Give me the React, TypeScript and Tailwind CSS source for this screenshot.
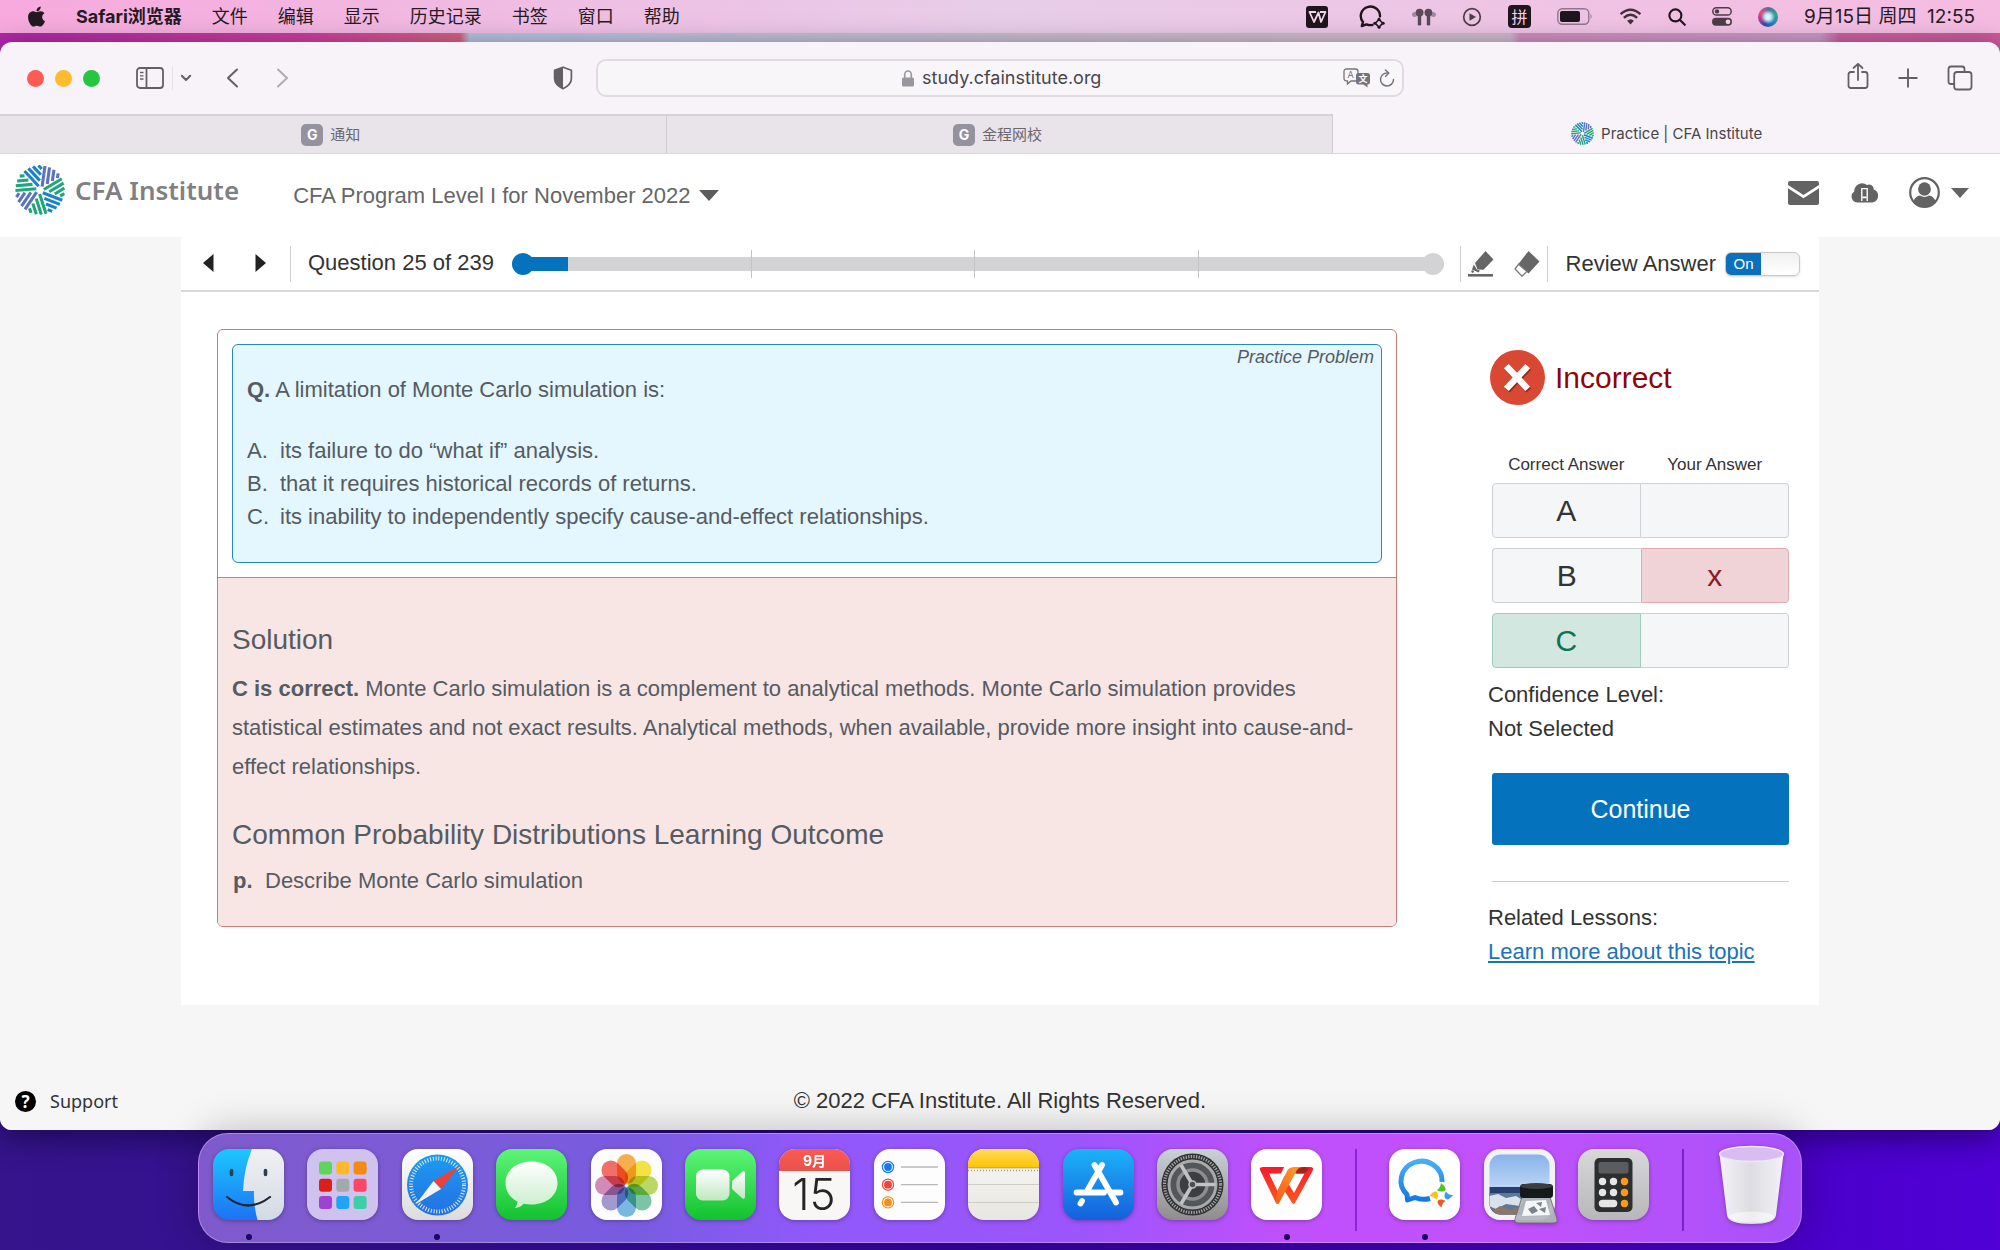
import React from "react";
import { FaApple } from "react-icons/fa";

const UI = "font-['Inter','Noto_Sans_CJK_SC',sans-serif]";

const PINWHEEL = [
  { angle: 8, color: "#5c74bd" },
  { angle: 59, color: "#1fa67a" },
  { angle: 111, color: "#1b83c6" },
  { angle: 162, color: "#1fa67a" },
  { angle: 214, color: "#5c74bd" },
  { angle: 265, color: "#1fa67a" },
  { angle: 317, color: "#1b83c6" },
];

function Pinwheel({ className }: { className: string }) {
  return (
    <svg viewBox="-25 -25 50 50" className={className} aria-hidden="true">
      {PINWHEEL.map((s) => (
        <g key={s.angle} transform={`rotate(${s.angle})`} stroke={s.color} strokeWidth="3.1">
          <path d="M1.6 -3.6V-24.5M6.3 -7V-23.7M11 -10.6V-22M15.6 -14.2V-19" />
        </g>
      ))}
    </svg>
  );
}

function MenuIcon({ label, children }: { label: string; children: React.ReactNode }) {
  return (
    <button type="button" aria-label={label} className="flex items-center">
      {children}
    </button>
  );
}

function MenuBar() {
  return (
    <header
      className={`flex h-[33px] items-center justify-between bg-linear-to-r from-[#f7a9dd] via-[#e7cde8] to-[#f5bbe1] pr-[25px] pl-[27px] text-[18px] leading-6 text-[#261a24] ${UI}`}
    >
      <nav className="flex items-center gap-[30px]">
        <button type="button" aria-label="Apple">
          <FaApple className="h-[23px] w-[19px] text-[#231a21]" />
        </button>
        <button type="button" className="font-bold">Safari浏览器</button>
        <button type="button">文件</button>
        <button type="button">编辑</button>
        <button type="button">显示</button>
        <button type="button">历史记录</button>
        <button type="button">书签</button>
        <button type="button">窗口</button>
        <button type="button">帮助</button>
      </nav>
      <div className="flex items-center gap-[26px]">
        <MenuIcon label="WPS">
          <svg viewBox="0 0 22 22" className="size-[22px]">
            <rect width="22" height="22" rx="3" fill="#1f151d" />
            <path d="M10 6H3.5L8 16L12.5 6.5L15 16L19.5 6H14" fill="none" stroke="#f3d5ea" strokeWidth="1.8" strokeLinejoin="round" />
          </svg>
        </MenuIcon>
        <MenuIcon label="WeCom">
          <svg viewBox="0 0 28 24" className="ml-1 h-6 w-7" fill="none" stroke="#1f151d" strokeWidth="2.4">
            <path d="M22 11.5A9.6 9.4 0 1 0 5 17L3.8 21L8.5 19.4Q11 20.5 14.5 20" strokeLinejoin="round" strokeLinecap="round" />
            <path d="M21 14.5L24.8 18.2L21 22L17.2 18.2Z" strokeWidth="1.6" />
            <g fill="#1f151d" stroke="none">
              <circle cx="21" cy="14.2" r="1.5" /><circle cx="25.2" cy="18.2" r="1.5" /><circle cx="21" cy="22.2" r="1.5" /><circle cx="16.8" cy="18.2" r="1.5" />
            </g>
          </svg>
        </MenuIcon>
        <MenuIcon label="AirPods">
          <svg viewBox="0 0 24 18" className="h-[18px] w-6" fill="#5a4a57">
            <circle cx="7.6" cy="4.6" r="3.9" /><circle cx="16.4" cy="4.6" r="3.9" />
            <rect x="5.8" y="6" width="3.4" height="11.5" rx="1.2" /><rect x="14.8" y="6" width="3.4" height="11.5" rx="1.2" />
            <circle cx="2.6" cy="6.5" r="2.5" opacity=".5" /><circle cx="21.4" cy="6.5" r="2.5" opacity=".5" />
          </svg>
        </MenuIcon>
        <MenuIcon label="正在播放">
          <svg viewBox="0 0 20 20" className="size-5">
            <circle cx="10" cy="10" r="8.3" fill="none" stroke="#4c3d49" strokeWidth="1.7" />
            <path d="M7.5 6.3L14 10L7.5 13.7Z" fill="#4c3d49" />
          </svg>
        </MenuIcon>
        <button type="button" className="grid size-[23px] place-items-center rounded bg-[#1f151d] text-[16px] leading-none text-[#f3d5ea]">
          拼
        </button>
        <MenuIcon label="电池">
          <svg viewBox="0 0 36 17" className="h-[17px] w-9">
            <rect x=".8" y=".8" width="31" height="15.4" rx="4.5" fill="none" stroke="#8c7888" strokeWidth="1.4" />
            <rect x="3" y="3" width="20" height="11" rx="2" fill="#1f151d" />
            <path d="M33.6 5.8Q35.6 8.5 33.6 11.2Z" fill="#8c7888" />
          </svg>
        </MenuIcon>
        <MenuIcon label="Wi-Fi">
          <svg viewBox="0 0 24 18" className="h-[17px] w-[23px]" fill="none" stroke="#3f313d" strokeWidth="2.5">
            <path d="M1.5 6.5Q12 -3 22.5 6.5M5 10.4Q12 4 19 10.4" />
            <path d="M8.4 13.6Q12 10.4 15.6 13.6L12 17.5Z" fill="#3f313d" stroke="none" />
          </svg>
        </MenuIcon>
        <MenuIcon label="搜索">
          <svg viewBox="0 0 18 18" className="size-[18px]" fill="none" stroke="#1f151d" strokeWidth="2.1" strokeLinecap="round">
            <circle cx="7.4" cy="7.4" r="6" /><path d="M12 12L16.8 16.8" />
          </svg>
        </MenuIcon>
        <MenuIcon label="控制中心">
          <svg viewBox="0 0 20 19" className="h-[19px] w-5">
            <rect x=".8" y=".8" width="18.4" height="7.2" rx="3.6" fill="none" stroke="#4c3d49" strokeWidth="1.5" />
            <circle cx="5" cy="4.4" r="2.2" fill="#4c3d49" />
            <rect y="10.8" width="20" height="8" rx="4" fill="#4c3d49" />
            <circle cx="16" cy="14.8" r="2.4" fill="#f3d5ea" />
          </svg>
        </MenuIcon>
        <MenuIcon label="Siri">
          <span className="size-5 rounded-full bg-[radial-gradient(circle_at_50%_50%,#fff_0%,#bfe9f5_22%,transparent_50%),conic-gradient(#5a6c9c,#2fa58f_20%,#2a7fc0_40%,#2b4fa5_55%,#b0389a_70%,#e0527f_85%,#5a6c9c)]" />
        </MenuIcon>
        <time className="text-[19px] whitespace-pre">9月15日 周四  12:55</time>
      </div>
    </header>
  );
}

function BrowserToolbar() {
  return (
    <div className={`grid h-[72px] grid-cols-[596fr_808fr_596fr] items-center text-[#635f66] ${UI}`}>
      <div className="flex items-center pr-[23px] pl-[27px]">
        <div className="flex gap-[11px]">
          <button type="button" aria-label="关闭" className="size-[17px] rounded-full bg-[#fe5b54]" />
          <button type="button" aria-label="最小化" className="size-[17px] rounded-full bg-[#fdbb2e]" />
          <button type="button" aria-label="全屏" className="size-[17px] rounded-full bg-[#28c640]" />
        </div>
        <button type="button" aria-label="边栏" className="ml-9">
          <svg viewBox="0 0 28 22" className="h-[22px] w-7" fill="none" stroke="currentColor" strokeWidth="1.8">
            <rect x="1" y="1" width="26" height="20" rx="3" /><path d="M10.5 1V21" /><path d="M4 5.5H7.5M4 8.8H7.5M4 12H7.5" strokeWidth="1.3" />
          </svg>
        </button>
        <span className="ml-2 h-6 w-px bg-[#e6e1e8]" />
        <button type="button" aria-label="标签页组" className="ml-[7px]">
          <svg viewBox="0 0 12 8" className="h-2 w-3" fill="none" stroke="currentColor" strokeWidth="2" strokeLinecap="round" strokeLinejoin="round">
            <path d="M1.8 1.8L6 6L10.2 1.8" />
          </svg>
        </button>
        <button type="button" aria-label="后退" className="ml-[34px]">
          <svg viewBox="0 0 13 20" className="h-5 w-[13px]" fill="none" stroke="currentColor" strokeWidth="2" strokeLinecap="round" strokeLinejoin="round">
            <path d="M11 1.5L2 10L11 18.5" />
          </svg>
        </button>
        <button type="button" aria-label="前进" className="ml-[37px] text-[#b0abb3]">
          <svg viewBox="0 0 13 20" className="h-5 w-[13px]" fill="none" stroke="currentColor" strokeWidth="2" strokeLinecap="round" strokeLinejoin="round">
            <path d="M2 1.5L11 10L2 18.5" />
          </svg>
        </button>
        <button type="button" aria-label="隐私报告" className="ml-auto">
          <svg viewBox="0 0 20 24" className="h-6 w-5">
            <path d="M10 1.2L18.4 4.2V12.5Q18.4 18.5 10 22.8Q1.6 18.5 1.6 12.5V4.2Z" fill="none" stroke="currentColor" strokeWidth="1.7" strokeLinejoin="round" />
            <path d="M10 1.2V22.8Q1.6 18.5 1.6 12.5V4.2Z" fill="currentColor" />
          </svg>
        </button>
      </div>
      <div className="flex h-[38px] items-center rounded-[10px] border-2 border-[#e0dbe2] bg-[#f9f6fa] px-[7px]">
        <span className="w-[62px]" />
        <div className="flex flex-1 items-center justify-center gap-2">
          <svg viewBox="0 0 12 17" className="h-[17px] w-3" aria-hidden="true">
            <path d="M2.7 8V4.6A3.3 3.6 0 0 1 9.3 4.6V8" fill="none" stroke="#9a969d" strokeWidth="1.6" />
            <rect y="7.4" width="12" height="9.2" rx="1.6" fill="#9a969d" />
          </svg>
          <input type="text" aria-label="地址" defaultValue="study.cfainstitute.org" className="h-7 w-[186px] bg-transparent text-[18px] leading-7 text-[#48454b] outline-none" />
        </div>
        <button type="button" aria-label="翻译">
          <svg viewBox="0 0 28 20" className="h-5 w-7 text-[#77737a]">
            <path d="M3.5 1H12.5Q15 1 15 3.5V10.5Q15 13 12.5 13H8L4.5 16V13Q1 13 1 10.5V3.5Q1 1 3.5 1Z" fill="none" stroke="currentColor" strokeWidth="1.3" />
            <path d="M15.5 5H24.5Q27 5 27 7.5V14Q27 16.5 24.5 16.5V19.5L20.5 16.5H15.5Q13 16.5 13 14V7.5Q13 5 15.5 5Z" fill="currentColor" />
            <text x="4.6" y="10.4" fontSize="9" fill="currentColor" fontFamily="Inter">A</text>
            <text x="15.5" y="14.2" fontSize="9" fontWeight="700" fill="#fff" fontFamily="Noto Sans CJK SC">文</text>
          </svg>
        </button>
        <button type="button" aria-label="重新载入" className="ml-2">
          <svg viewBox="0 0 16 18" className="h-[18px] w-4" fill="none" stroke="#77737a" strokeWidth="1.5" strokeLinecap="round" strokeLinejoin="round">
            <path d="M8.6 4A6.5 6.5 0 1 0 14.5 10.4" /><path d="M6.4 1L9.8 4L6.6 7.2" />
          </svg>
        </button>
      </div>
      <div className="flex items-center justify-end gap-[29px] pr-[27px]">
        <button type="button" aria-label="共享">
          <svg viewBox="0 0 22 28" className="mb-1 h-7 w-[22px]" fill="none" stroke="currentColor" strokeWidth="1.8" strokeLinecap="round" strokeLinejoin="round">
            <path d="M7 10H4Q1.5 10 1.5 12.5V23.5Q1.5 26 4 26H18Q20.5 26 20.5 23.5V12.5Q20.5 10 18 10H15" /><path d="M11 18V2M6.5 6L11 1.8L15.5 6" />
          </svg>
        </button>
        <button type="button" aria-label="新标签页">
          <svg viewBox="0 0 20 20" className="size-5" stroke="currentColor" strokeWidth="1.9" strokeLinecap="round"><path d="M10 1.2V18.8M1.2 10H18.8" /></svg>
        </button>
        <button type="button" aria-label="标签页概览">
          <svg viewBox="0 0 26 26" className="size-[26px]" fill="none" stroke="currentColor" strokeWidth="1.8">
            <path d="M7 19H4Q1.5 19 1.5 16.5V4Q1.5 1.5 4 1.5H15Q17.5 1.5 17.5 4V7" /><rect x="7.2" y="7" width="17.3" height="17.5" rx="2.8" />
          </svg>
        </button>
      </div>
    </div>
  );
}

function TabBar() {
  const idle = "flex items-center justify-center gap-[7px] border-t-2 border-r border-t-[#d6d0d8] border-r-[#d0cbd2] bg-[#e9e4ea] pr-1 text-[#6b676e]";
  const badge = "grid size-[22px] place-items-center rounded-[5px] bg-[#93929e] text-[14px] leading-none font-bold text-white";
  return (
    <div role="tablist" className={`grid h-10 grid-cols-3 border-b border-[#dcd7de] text-[15px] leading-5 ${UI}`}>
      <button role="tab" type="button" aria-selected="false" className={idle}><span className={badge}>G</span>通知</button>
      <button role="tab" type="button" aria-selected="false" className={idle}><span className={badge}>G</span>金程网校</button>
      <button role="tab" type="button" aria-selected="true" className="flex items-center justify-center gap-[7px] text-[#48454b]">
        <Pinwheel className="size-[23px]" />Practice | CFA Institute
      </button>
    </div>
  );
}

function SiteHeader() {
  return (
    <div className="flex h-[83px] items-center bg-white pr-[31px] pl-[15px] text-[#666]">
      <a href="#home" className="mb-3 flex items-center gap-[10px] font-['Noto_Sans',sans-serif] text-[26px] leading-9 font-semibold text-[#7f8083]">
        <Pinwheel className="size-[50px]" />CFA Institute
      </a>
      <button type="button" className="ml-[54px] flex items-center gap-2 text-[22px] leading-8">
        CFA Program Level I for November 2022
        <svg viewBox="0 0 20 11" className="h-[11px] w-5"><path d="M0 0H20L10 11Z" fill="#5c5c5c" /></svg>
      </button>
      <div className="mb-1.5 ml-auto flex items-center">
        <button type="button" aria-label="Messages">
          <svg viewBox="0 0 31 24" className="h-6 w-[31px]" fill="#636363">
            <path d="M2 0H29Q31 0 31 2V4L15.5 14L0 4V2Q0 0 2 0Z" /><path d="M0 7.2L15.5 17.2L31 7.2V22Q31 24 29 24H2Q0 24 0 22Z" />
          </svg>
        </button>
        <button type="button" aria-label="Downloads" className="ml-8">
          <svg viewBox="0 0 27 21" className="h-[21px] w-[27px]">
            <path d="M6 20.5A6 6 0 0 1 3.2 9.6A8 8 0 0 1 16 3A4.5 4.5 0 0 1 22.6 7.4A6.8 6.8 0 0 1 21.5 20.5Z" fill="#636363" />
            <path d="M10.8 19V6.6H16.2V19" fill="none" stroke="#fff" strokeWidth="1.4" />
            <path d="M11.5 14.6H15.5V16.2H11.5Z" fill="#fff" />
          </svg>
        </button>
        <button type="button" aria-label="Account" className="ml-[31px] flex items-center gap-[11px]">
          <svg viewBox="0 0 31 31" className="size-[31px]">
            <circle cx="15.5" cy="15.5" r="14.3" fill="none" stroke="#636363" strokeWidth="2.2" />
            <ellipse cx="15.5" cy="12" rx="6.4" ry="6.8" fill="#636363" />
            <path d="M4.5 24Q6.5 19.2 11 18.6Q15.5 21.5 20 18.6Q24.5 19.2 26.5 24Q22 30 15.5 30Q9 30 4.5 24Z" fill="#636363" />
          </svg>
          <svg viewBox="0 0 18 10" className="h-[10px] w-[18px]"><path d="M0 0H18L9 10Z" fill="#636363" /></svg>
        </button>
      </div>
    </div>
  );
}

function QuestionBar() {
  const rule = "h-9 w-px bg-[#cfcfcf]";
  return (
    <div className="flex h-[55px] items-center border-b-2 border-[#dadada] pr-[19px] pl-[22px] text-[22px] leading-8 text-[#333]">
      <button type="button" aria-label="Previous question" className="mb-0.5">
        <svg viewBox="0 0 11 18" className="h-[18px] w-[11px]"><path d="M10.5 0V18L0 9Z" fill="#222" /></svg>
      </button>
      <button type="button" aria-label="Next question" className="mb-0.5 ml-[41px]">
        <svg viewBox="0 0 11 18" className="h-[18px] w-[11px]"><path d="M.5 0V18L11 9Z" fill="#222" /></svg>
      </button>
      <span className={`ml-6 ${rule}`} />
      <label htmlFor="progress" className="mb-0.5 ml-[17px] whitespace-nowrap">Question 25 of 239</label>
      <div className="relative ml-[18px] flex h-7 flex-1 items-center">
        <div className="grid h-[14px] w-full grid-cols-[7fr_53fr] rounded-full bg-[#d3d3d5]">
          <div className="ml-2.5 bg-[#0572bd]" style={{ width: `${(41 / 97) * 100}%` }} />
        </div>
        <div className="absolute inset-y-0 right-[22px] left-4 flex justify-evenly">
          <span className="w-px bg-[#c4c4c4]" /><span className="w-px bg-[#c4c4c4]" /><span className="w-px bg-[#c4c4c4]" />
        </div>
        <span className="absolute left-0 size-[22px] rounded-full bg-[#0572bd]" />
        <span className="absolute right-0 size-[22px] rounded-full bg-[#d3d3d5]" />
        <input id="progress" type="range" min={1} max={239} defaultValue={25} className="absolute inset-0 m-0 w-full cursor-pointer opacity-0" />
      </div>
      <span className={`ml-4 ${rule}`} />
      <button type="button" aria-label="Highlight" className="ml-[7px]">
        <svg viewBox="0 0 26 26" className="size-[26px]" fill="#666">
          <path d="M17.5 0L25.5 8.6L15.5 18.8L9.5 18.4L7 12Z" /><path d="M5.8 13.6L9 18.8L12 19.6L10.5 21.4L4 18.6Z" /><circle cx="4.6" cy="20.6" r="1.3" /><rect y="23" width="25" height="2.6" />
        </svg>
      </button>
      <button type="button" aria-label="Erase" className="ml-5">
        <svg viewBox="0 0 26 26" className="size-[26px]">
          <path d="M14.5 0L25.5 10.5L14.5 22.5L4.4 13Z" fill="#666" /><path d="M4.6 13.2L1 18L8 25.2L13 20.4Z" fill="#fff" stroke="#777" strokeWidth="1.3" />
        </svg>
      </button>
      <span className={`ml-[7px] ${rule}`} />
      <label className="ml-[18px] flex cursor-pointer items-center gap-[9px] whitespace-nowrap">
        Review Answer
        <input type="checkbox" defaultChecked className="sr-only" />
        <span className="flex h-6 w-[75px] overflow-hidden rounded-md border border-[#c9c9c9] bg-linear-to-b from-[#f0f0f0] to-white shadow-sm">
          <span className="grid w-[35px] place-items-center bg-[#0a70bb] text-[15px] leading-none text-white">On</span>
        </span>
      </label>
    </div>
  );
}

function QuestionCard() {
  return (
    <article className="min-w-0 flex-1 overflow-hidden rounded-md border border-[#c97b76] text-[22px] text-[#545b62]">
      <div className="p-[14px]">
        <section className="rounded-md border border-[#2787c4] bg-[#e4f6fe] pr-[7px] pb-[29px] pl-[14px] leading-[33px]">
          <p className="text-right text-[18px] leading-6 italic">Practice Problem</p>
          <p className="mt-1"><strong>Q.</strong> A limitation of Monte Carlo simulation is:</p>
          <ol className="mt-7">
            <li className="flex"><span className="w-[33px]">A.</span>its failure to do “what if” analysis.</li>
            <li className="flex"><span className="w-[33px]">B.</span>that it requires historical records of returns.</li>
            <li className="flex"><span className="w-[33px]">C.</span>its inability to independently specify cause-and-effect relationships.</li>
          </ol>
        </section>
      </div>
      <section className="border-t border-[#c97b76] bg-[#f8e6e5] px-[14px] pt-[44px] pb-[29px]">
        <h2 className="text-[28px] leading-9">Solution</h2>
        <p className="mt-[11px] leading-[39px]">
          <strong>C is correct.</strong> Monte Carlo simulation is a complement to analytical methods. Monte Carlo simulation provides statistical estimates and not exact results. Analytical methods, when available, provide more insight into cause-and-effect relationships.
        </p>
        <h2 className="mt-[31px] text-[28px] leading-9">Common Probability Distributions Learning Outcome</h2>
        <p className="mt-[11px] flex leading-[33px]"><strong className="w-[33px] pl-px">p.</strong>Describe Monte Carlo simulation</p>
      </section>
    </article>
  );
}

function AnswerPanel() {
  const plain = "h-[55px] border border-[#d0d1d4] bg-[#f5f6f7] p-0";
  return (
    <aside className="w-[301px] pt-[21px] text-[22px] leading-[34px] text-[#333]">
      <div className="flex items-center gap-[10px] pl-0.5 text-[30px] leading-9 text-[#900505]">
        <svg viewBox="0 0 55 55" className="size-[55px]" aria-hidden="true">
          <circle cx="27.5" cy="27.5" r="27.5" fill="#d94832" />
          <path d="M19.5 20L36.5 38M36.5 20L19.5 38" stroke="#8e2a20" strokeWidth="6.5" strokeLinecap="square" />
          <path d="M18.5 18.5L35.5 36.5M35.5 18.5L18.5 36.5" stroke="#fff" strokeWidth="6.5" strokeLinecap="square" />
        </svg>
        Incorrect
      </div>
      <div className="pl-1">
        <table className="mt-[38px] w-full table-fixed border-separate border-spacing-x-0 border-spacing-y-[10px] text-center text-[30px] leading-9">
          <thead>
            <tr className="text-[17px] leading-4">
              <th scope="col" className="p-0 pt-1 font-normal">Correct Answer</th>
              <th scope="col" className="p-0 pt-1 font-normal">Your Answer</th>
            </tr>
          </thead>
          <tbody>
            <tr><td className={`rounded-l-sm ${plain}`}>A</td><td className={`rounded-r-sm border-l-0 ${plain}`} /></tr>
            <tr>
              <td className={`rounded-l-sm border-r-0 ${plain}`}>B</td>
              <td className="rounded-r-sm border border-[#dfabb0] bg-[#efd3d6] p-0 text-[#8b1a24]">x</td>
            </tr>
            <tr>
              <td className="h-[55px] rounded-l-sm border border-[#9dcdb9] bg-[#d1e7df] p-0 text-[#0d7350]">C</td>
              <td className={`rounded-r-sm border-l-0 ${plain}`} />
            </tr>
          </tbody>
        </table>
      </div>
      <p>Confidence Level:</p>
      <p>Not Selected</p>
      <div className="pl-1">
        <button type="button" className="mt-[27px] h-[72px] w-full rounded-[3px] bg-[#0572bd] text-[25px] text-white">Continue</button>
        <hr className="mt-9 border-[#cdcdcd]" />
      </div>
      <p className="mt-[19px]">Related Lessons:</p>
      <a href="#topic" className="text-[#1c72b8] underline">Learn more about this topic</a>
    </aside>
  );
}

function Page() {
  return (
    <main className="flex flex-1 flex-col bg-[#f6f6f7] font-['Liberation_Sans',Arial,sans-serif]">
      <SiteHeader />
      <div className="mx-[181px] bg-white">
        <QuestionBar />
        <div className="flex items-start gap-[91px] pt-[37px] pr-[30px] pb-9 pl-9">
          <QuestionCard />
          <AnswerPanel />
        </div>
      </div>
      <footer className="mt-auto grid grid-cols-[1fr_auto_1fr] items-center px-[15px] pb-3 text-[22px] leading-[34px] text-[#333]">
        <a href="#support" className="flex items-center gap-[14px] font-['Noto_Sans',sans-serif] text-[18px] text-[#333]">
          <span className="grid size-[21px] place-items-center rounded-full bg-black text-[17px] leading-none font-bold text-white">?</span>
          Support
        </a>
        <p>© 2022 CFA Institute. All Rights Reserved.</p>
      </footer>
    </main>
  );
}

function AppIcon({ name, running, children }: { name: string; running?: boolean; children: React.ReactNode }) {
  return (
    <button type="button" aria-label={name} className="relative">
      <svg viewBox="0 0 71 71" className="size-[71px] overflow-visible drop-shadow-[0_1px_2px_rgba(0,0,0,0.3)]">{children}</svg>
      {running && <span className="absolute -bottom-5 left-1/2 size-1.5 -translate-x-1/2 rounded-full bg-[#1a0560]" />}
    </button>
  );
}

function Grad({ id, from, to }: { id: string; from: string; to: string }) {
  return (
    <linearGradient id={id} x1="0" y1="0" x2="0" y2="1">
      <stop offset="0" stopColor={from} /><stop offset="1" stopColor={to} />
    </linearGradient>
  );
}

const LAUNCH = ["#5fd65a", "#fdb92a", "#f58a12", "#dc1f1c", "#a3a8ad", "#fb4668", "#9d42d3", "#1fa4fa", "#3bcfa3"];
const PETALS = ["#f89a1c", "#f3dc12", "#a9cf38", "#55b98c", "#55a5dc", "#8a7cc4", "#c86ba5", "#f0483e"];
const KEYS = [[0, 0], [1, 0], [2, 0], [0, 1], [1, 1], [2, 1], [2, 2]];

function Dock() {
  return (
    <nav
      aria-label="Dock"
      className="relative mx-[198px] mt-[3px] mb-[7px] flex h-[110px] items-start justify-between rounded-[30px] border border-white/30 bg-[linear-gradient(90deg,#7f5acb_0%,#785ce0_27%,#9058fa_38%,#9c55fb_55%,#c050fc_68%,#c051fc_82%,#a852fa_100%)] px-[14px] pt-[15px] shadow-[0_0_40px_rgba(0,0,0,0.28)]"
    >
      <AppIcon name="访达" running>
        <defs><Grad id="fi" from="#1cc8fe" to="#1d72f5" /><Grad id="fw" from="#f1f1f4" to="#d2dae4" /><clipPath id="fc"><rect width="71" height="71" rx="16" /></clipPath></defs>
        <g clipPath="url(#fc)">
          <rect width="71" height="71" fill="url(#fi)" />
          <path d="M39 0Q31 19 30 42H41Q40.5 57 44.5 71H71V0Z" fill="url(#fw)" />
        </g>
        <path d="M18.5 21.5V25.5M52.5 21.5V25.5" stroke="#2c3e50" strokeWidth="3.6" strokeLinecap="round" />
        <path d="M14 48Q35 65 57 48" fill="none" stroke="#1c2733" strokeWidth="2.2" strokeLinecap="round" />
      </AppIcon>
      <AppIcon name="启动台">
        <rect width="71" height="71" rx="16" fill="#d0c2ee" />
        {LAUNCH.map((c, i) => <rect key={c} x={12 + (i % 3) * 17.3} y={12.5 + Math.floor(i / 3) * 17.3} width="13" height="13" rx="3" fill={c} />)}
      </AppIcon>
      <AppIcon name="Safari浏览器" running>
        <defs><Grad id="sa" from="#1d9cf0" to="#2470e2" /><Grad id="sb" from="#ffffff" to="#dcdcdc" /></defs>
        <rect width="71" height="71" rx="16" fill="url(#sb)" />
        <circle cx="35.5" cy="36" r="30.5" fill="url(#sa)" />
        <circle cx="35.5" cy="36" r="26.5" fill="none" stroke="#fff" strokeWidth="4" strokeDasharray="1 1.775" opacity=".85" />
        <path d="M57 17L31.5 32L39 40Z" fill="#ee4037" /><path d="M14 55L31.5 32L39 40Z" fill="#f4f4f4" />
      </AppIcon>
      <AppIcon name="信息">
        <defs><Grad id="me" from="#5ef578" to="#12c22e" /><Grad id="mb" from="#ffffff" to="#c9edcb" /></defs>
        <rect width="71" height="71" rx="16" fill="url(#me)" />
        <path d="M35.5 12.5C51 12.5 61.5 22 61.5 34S51 55.5 35.5 55.5Q31 55.5 27.5 54.8Q24.5 58.5 19 59Q21.5 56 21.5 52.5C13.5 48.5 9.5 42 9.5 34C9.5 22 20 12.5 35.5 12.5Z" fill="url(#mb)" />
      </AppIcon>
      <AppIcon name="照片">
        <rect width="71" height="71" rx="16" fill="#fdfdfd" />
        {PETALS.map((c, i) => (
          <rect key={c} x="26" y="5" width="19" height="30" rx="9.5" fill={c} opacity=".78" transform={`rotate(${i * 45} 35.5 36.5)`} className="mix-blend-multiply" />
        ))}
      </AppIcon>
      <AppIcon name="FaceTime">
        <defs><Grad id="ft" from="#5ef578" to="#12c22e" /><Grad id="fb" from="#ffffff" to="#bfe8c2" /></defs>
        <rect width="71" height="71" rx="16" fill="url(#ft)" />
        <rect x="11" y="20.5" width="33.5" height="31" rx="7" fill="url(#fb)" /><path d="M47 32L57.5 22.5Q60 21.5 60 24V48Q60 50.5 57.5 49.5L47 40Z" fill="url(#fb)" />
      </AppIcon>
      <AppIcon name="日历">
        <defs><Grad id="ca" from="#fb5b54" to="#e8524a" /><clipPath id="cc"><rect width="71" height="71" rx="16" /></clipPath></defs>
        <g clipPath="url(#cc)"><rect width="71" height="71" fill="#f9f7f6" /><rect width="71" height="22" fill="url(#ca)" /></g>
        <text x="35.5" y="16.5" textAnchor="middle" fontSize="14" fontWeight="700" fill="#fff" fontFamily="Inter, Noto Sans CJK SC">9月</text>
        <text x="35" y="61" textAnchor="middle" fontSize="44" fontWeight="300" fill="#252525" fontFamily="Inter">15</text>
      </AppIcon>
      <AppIcon name="提醒事项">
        <rect width="71" height="71" rx="16" fill="#fdfdfd" />
        {["#1179f2", "#f2453a", "#f39015"].map((c, i) => (
          <g key={c}>
            <circle cx="14" cy={18 + i * 17.7} r="5.6" fill="none" stroke={c} strokeWidth="1.2" /><circle cx="14" cy={18 + i * 17.7} r="3.9" fill={c} />
            <path d={`M27 ${18 + i * 17.7}H64`} stroke="#b9b9bd" strokeWidth="1.3" />
          </g>
        ))}
      </AppIcon>
      <AppIcon name="备忘录">
        <defs><Grad id="no" from="#fedb5a" to="#fdc504" /><Grad id="np" from="#f8f7f4" to="#e8e6e0" /><clipPath id="nc"><rect width="71" height="71" rx="16" /></clipPath></defs>
        <g clipPath="url(#nc)">
          <rect width="71" height="71" fill="url(#np)" /><rect width="71" height="18.5" fill="url(#no)" /><path d="M0 18.8H71" stroke="#b59a40" />
          <path d="M0 21.5H71" stroke="#9d9b96" strokeWidth="1.6" strokeDasharray="1 2" /><path d="M0 35.5H71M0 53.5H71" stroke="#cfcdc8" />
        </g>
      </AppIcon>
      <AppIcon name="App Store">
        <defs><Grad id="as" from="#1bb3f8" to="#1560dd" /></defs>
        <rect width="71" height="71" rx="16" fill="url(#as)" />
        <g stroke="#fff" strokeWidth="5.8" strokeLinecap="round"><path d="M39 16L23.5 43M31.5 16L53 53.5M13.5 43.5H41M50 43.5H57.5M19 52L17.5 54.5" /></g>
      </AppIcon>
      <AppIcon name="系统偏好设置">
        <defs><Grad id="sp" from="#c9d2d8" to="#8f8d8c" /></defs>
        <rect width="71" height="71" rx="16" fill="url(#sp)" />
        <circle cx="35.5" cy="35.5" r="31" fill="#2f3133" />
        <circle cx="35.5" cy="35.5" r="28" fill="none" stroke="#a2a4a6" strokeWidth="3.2" strokeDasharray="1.3 1.3" />
        <circle cx="35.5" cy="35.5" r="23.5" fill="#54575a" stroke="#a7a9ab" strokeWidth="3" />
        <circle cx="35.5" cy="35.5" r="14.5" fill="#3c3f41" stroke="#8b8d8f" strokeWidth="3.5" />
        <path d="M35.5 35.5H58.5M35.5 35.5L24 16M35.5 35.5L24 55" stroke="#c0c2c4" strokeWidth="3.6" />
        <circle cx="35.5" cy="35.5" r="3.5" fill="#4c4f51" stroke="#c0c2c4" strokeWidth="1.5" />
      </AppIcon>
      <AppIcon name="WPS Office" running>
        <defs><Grad id="w1" from="#f8192c" to="#fc5a1c" /><linearGradient id="w2" x1="0" y1="1" x2="1" y2="0"><stop offset="0" stopColor="#fb5a1a" /><stop offset="1" stopColor="#fba02c" /></linearGradient></defs>
        <rect width="71" height="71" rx="16" fill="#fff" />
        <path d="M33 18H12Q7.5 18 9.5 22L24.5 53Q26.5 57 28.5 53L37 35L33.5 27L26.5 42L18 24.5H30Z" fill="url(#w1)" />
        <path d="M34 29L30.5 37L40.5 53Q42.5 57 44.5 53L61.5 22Q63.5 18 59 18H45L42 24.5H53.5L43 44Z" fill="url(#w1)" />
        <path d="M24.5 53Q26.5 57 28.5 53L45 23Q46.5 18 52 18H44Q38 18 36 22L26.5 42Z" fill="url(#w2)" />
        <path d="M45 24.5Q46 18 54 18L58 20L53.5 24.5Z" fill="#a82410" />
      </AppIcon>
      <span className="mx-[9px] h-[82px] w-0.5 bg-[#8a26d6]" />
      <AppIcon name="企业微信" running>
        <defs><Grad id="qy" from="#45aef8" to="#1479e4" /></defs>
        <rect width="71" height="71" rx="16" fill="#fff" />
        <path d="M53 33A20.5 19.5 0 1 0 18 45.5L18.5 51L26 48.5Q33 51.5 41 49.5" fill="none" stroke="url(#qy)" strokeWidth="5" strokeLinejoin="round" />
        <path d="M52 34C58 39 57.5 42 54 42.5Q50 43 48 41Q51.5 39 52 34Z" fill="#4fc41d" /><path d="M64 46C60 51.5 57 51.5 55.5 48Q55 45 57 42.5Q59 46 64 46Z" fill="#3a9bf0" />
        <path d="M52.5 58.5C47.5 54.5 47.5 51.5 51 50.5Q54 50 56.5 52Q53 54 52.5 58.5Z" fill="#f2571d" /><path d="M40.5 47C44.5 41.5 48 41.5 49 45Q49.5 48 47.5 50.5Q45 47.5 40.5 47Z" fill="#fbc21c" />
      </AppIcon>
      <AppIcon name="预览">
        <defs><Grad id="pv" from="#86b2ea" to="#bdd6f4" /><clipPath id="pc"><rect x="5.5" y="5.5" width="60" height="60" rx="11" /></clipPath></defs>
        <rect width="71" height="71" rx="16" fill="#f2f2f4" />
        <g clipPath="url(#pc)">
          <rect x="5" y="5" width="61" height="34" fill="url(#pv)" /><rect x="5" y="38" width="61" height="28" fill="#28406f" /><rect x="5" y="44" width="61" height="22" fill="#5d7896" />
          <path d="M5 47L14 45L22 49L32 47L40 52L36 57L22 55L12 60L5 57Z" fill="#d9e2ea" /><path d="M8 62L16 57L26 61L36 58V66H8Z" fill="#8a7768" />
        </g>
        <path d="M38 48H66L73 70Q74 74 69 74H35Q30 74 31 70Z" fill="#b4b8bd" opacity=".93" stroke="#6d6f73" /><path d="M42 52L62 51L66 66L38 67Z" fill="#f5f6f8" />
        <path d="M44 60L50 57L54 62L48 65ZM52 54L58 53L57 58ZM55 60L62 58L61 64Z" fill="#7b838c" />
        <rect x="36" y="35" width="33" height="14" rx="3.5" fill="#171819" /><ellipse cx="52.5" cy="37" rx="16" ry="3" fill="#3b3d3f" />
      </AppIcon>
      <AppIcon name="计算器">
        <defs><Grad id="cl" from="#d8d8d9" to="#b7b7b9" /></defs>
        <rect width="71" height="71" rx="16" fill="url(#cl)" />
        <rect x="16.5" y="9" width="38" height="54" rx="5" fill="#2d2e30" /><rect x="20.5" y="13" width="30" height="11.5" rx="2" fill="#5a5c5e" />
        {KEYS.map(([x, y]) => <circle key={`${x}-${y}`} cx={24.5 + x * 11} cy={32.5 + y * 11} r="3.7" fill={x === 2 ? "#fc9a14" : "#e6e6e6"} />)}
        <rect x="20.8" y="50.8" width="18.5" height="7.4" rx="3.7" fill="#e6e6e6" />
      </AppIcon>
      <span className="mx-[9px] h-[82px] w-0.5 bg-[#7a22cc]" />
      <AppIcon name="废纸篓">
        <defs><linearGradient id="tr"><stop offset="0" stopColor="#f4f2f7" /><stop offset=".5" stopColor="#dcdce2" /><stop offset="1" stopColor="#f4f2f7" /></linearGradient></defs>
        <path d="M3.5 5L11 66Q12 75 35.5 75T60 66L67.5 5Z" fill="url(#tr)" />
        <ellipse cx="35.5" cy="5" rx="32" ry="7.5" fill="#d9bdf0" stroke="#efe6f7" strokeWidth="1.4" />
        <ellipse cx="35.5" cy="68" rx="22.5" ry="5.5" fill="#fff" opacity=".5" />
      </AppIcon>
    </nav>
  );
}

export default function App() {
  return (
    <div className="flex min-h-screen flex-col bg-linear-to-r from-[#35148c] via-[#3603a0] to-[#5000d6]">
      <MenuBar />
      <div className="flex flex-1 flex-col bg-[linear-gradient(90deg,#b027a6_0%,#cf4199_16%,#d4627f_23%,#b5c3db_23.5%,#cdbcc9_60%,#cfbccb_75.5%,#d18fbb_76%,#c99cc4_91%,#cd609e_92%,#cb5a98_100%)] bg-[length:100%_60px] bg-no-repeat pt-[9px]">
        <div className="flex flex-1 flex-col overflow-hidden rounded-xl bg-[#f7f3f9] shadow-[0_8px_30px_rgba(10,0,40,0.55)]">
          <BrowserToolbar />
          <TabBar />
          <Page />
        </div>
      </div>
      <Dock />
    </div>
  );
}
